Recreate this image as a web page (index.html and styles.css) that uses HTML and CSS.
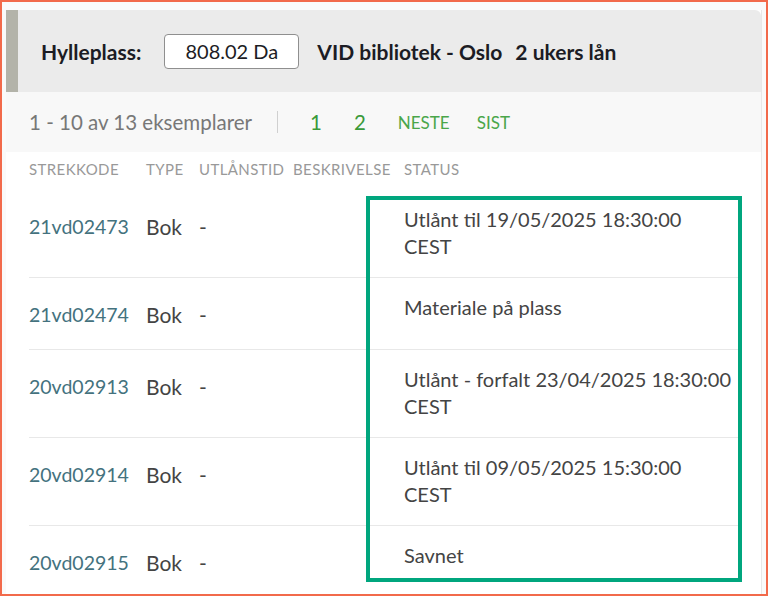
FILE: index.html
```html
<!DOCTYPE html>
<html lang="no">
<head>
    <meta charset="UTF-8">
    <meta name="viewport" content="width=device-width, initial-scale=1.0">
    <title>Eksemplarer</title>
    <link rel="stylesheet" href="styles.css">
</head>
<body>
    <div class="frame">
        <div class="holdings">
            <div class="shelf-bar">
                <span class="shelf-label">Hylleplass:</span>
                <span class="call-number">808.02 Da</span>
                <span class="library">VID bibliotek - Oslo</span>
                <span class="loan-policy">2 ukers lån</span>
            </div>
            <div class="pager">
                <span class="pager-count">1 - 10 av 13 eksemplarer</span>
                <span class="pager-sep"></span>
                <a class="pager-page" href="#">1</a>
                <a class="pager-page" href="#">2</a>
                <a class="pager-link" href="#">Neste</a>
                <a class="pager-link" href="#">Sist</a>
            </div>
            <table class="items">
                <colgroup>
                    <col class="col-barcode">
                    <col class="col-type">
                    <col class="col-loan">
                    <col class="col-desc">
                    <col class="col-status">
                </colgroup>
                <thead>
                    <tr>
                        <th>Strekkode</th>
                        <th>Type</th>
                        <th>Utlånstid</th>
                        <th>Beskrivelse</th>
                        <th>Status</th>
                    </tr>
                </thead>
                <tbody>
                    <tr>
                        <td class="barcode"><a href="#">21vd02473</a></td>
                        <td>Bok</td>
                        <td>-</td>
                        <td></td>
                        <td class="status">Utlånt til 19/05/2025 18:30:00<br>CEST</td>
                    </tr>
                    <tr>
                        <td class="barcode"><a href="#">21vd02474</a></td>
                        <td>Bok</td>
                        <td>-</td>
                        <td></td>
                        <td class="status">Materiale på plass</td>
                    </tr>
                    <tr>
                        <td class="barcode"><a href="#">20vd02913</a></td>
                        <td>Bok</td>
                        <td>-</td>
                        <td></td>
                        <td class="status">Utlånt - forfalt 23/04/2025 18:30:00<br>CEST</td>
                    </tr>
                    <tr>
                        <td class="barcode"><a href="#">20vd02914</a></td>
                        <td>Bok</td>
                        <td>-</td>
                        <td></td>
                        <td class="status">Utlånt til 09/05/2025 15:30:00<br>CEST</td>
                    </tr>
                    <tr>
                        <td class="barcode"><a href="#">20vd02915</a></td>
                        <td>Bok</td>
                        <td>-</td>
                        <td></td>
                        <td class="status">Savnet</td>
                    </tr>
                </tbody>
            </table>
        </div>
        <div class="highlight-box"></div>
    </div>
</body>
</html>
```

FILE: styles.css
```css
body {
    margin: 0;
    background: #fff;
    font-family: Lato, "Open Sans", Arial, sans-serif;
    color: #444;
}

.frame {
    position: relative;
    height: 596px;
    box-sizing: border-box;
    border: 2px solid #f26a4b;
    padding: 8px 4px 0 4px;
    background: #fafafa;
    overflow: hidden;
}

.holdings {
    background: #fff;
    border-right: 1px solid #e8e8e8;
    height: 100%;
}

.shelf-bar {
    display: flex;
    align-items: center;
    height: 82px;
    padding-left: 23px;
    background: #ebebeb;
    border-left: 12px solid #b3b3a9;
    border-top-right-radius: 6px;
    font-size: 21px;
    font-weight: bold;
    color: #1c1c24;
}

.call-number {
    margin-left: 23px;
    width: 135px;
    height: 35px;
    box-sizing: border-box;
    display: flex;
    align-items: center;
    justify-content: center;
    background: #fff;
    border: 1px solid #8f8f8f;
    border-radius: 4px;
    font-size: 20px;
    font-weight: normal;
}

.library {
    margin-left: 18px;
}

.loan-policy {
    margin-left: 13px;
}

.pager {
    display: flex;
    align-items: center;
    height: 60px;
    padding-left: 23px;
    background: #f8f8f8;
    font-size: 20.5px;
}

.pager-count {
    color: #777;
}

.pager-sep {
    width: 1px;
    height: 22px;
    background: #d0d0d0;
    margin: 0 32px 0 25px;
}

.pager a {
    color: #3a9a3a;
    text-decoration: none;
    margin-right: 32px;
}

.pager a.pager-link {
    font-size: 17px;
    text-transform: uppercase;
    color: #4aa64a;
    margin-right: 27px;
}

.items {
    margin-left: 23px;
    width: 711px;
    border-collapse: collapse;
    table-layout: fixed;
}

.col-barcode { width: 117px; }
.col-type { width: 53px; }
.col-loan { width: 94px; }
.col-desc { width: 111px; }

.items th {
    text-align: left;
    font-weight: normal;
    font-size: 15px;
    letter-spacing: 0.4px;
    text-transform: uppercase;
    color: #999;
    padding: 7px 0 11px;
    line-height: 20px;
    white-space: nowrap;
}

.items td {
    vertical-align: top;
    font-size: 21px;
    line-height: 27px;
    padding: 23px 0 21px;
    color: #444;
}

.items tbody tr + tr td {
    border-top: 1px solid #e8e8e8;
}

.items td.barcode {
    font-size: 19.5px;
}

.items td a {
    color: #44727e;
    text-decoration: none;
}

.items td.status {
    font-size: 20px;
    padding: 16px 0 17px;
}

.highlight-box {
    position: absolute;
    left: 364px;
    top: 194px;
    width: 376px;
    height: 386px;
    box-sizing: border-box;
    border: 4px solid #00a67e;
}
```
